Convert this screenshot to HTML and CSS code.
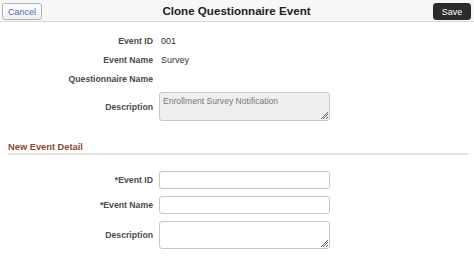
FILE: index.html
```html
<!DOCTYPE html>
<html lang="en">
<head>
    <meta charset="UTF-8">
    <meta name="viewport" content="width=device-width, initial-scale=1.0">
    <title>Clone Questionnaire Event</title>
    <link rel="stylesheet" href="styles.css">
</head>
<body>
    <header class="topbar">
        <div class="left"><button class="btn cancel">Cancel</button></div>
        <h1>Clone Questionnaire Event</h1>
        <div class="right"><button class="btn save">Save</button></div>
    </header>

    <div class="form show">
        <div class="row">
            <label>Event ID</label>
            <span class="value">001</span>
        </div>
        <div class="row">
            <label>Event Name</label>
            <span class="value">Survey</span>
        </div>
        <div class="row">
            <label>Questionnaire Name</label>
            <span class="value"></span>
        </div>
        <div class="row desc">
            <label>Description</label>
            <textarea class="area readonly" readonly>Enrollment Survey Notification</textarea>
        </div>
    </div>

    <h2 class="section">New Event Detail</h2>

    <div class="form edit">
        <div class="row">
            <label>*Event ID</label>
            <input type="text" class="field">
        </div>
        <div class="row">
            <label>*Event Name</label>
            <input type="text" class="field">
        </div>
        <div class="row desc">
            <label>Description</label>
            <textarea class="area"></textarea>
        </div>
    </div>
</body>
</html>
```

FILE: styles.css
```css
body {
    margin: 0;
    font-family: "Liberation Sans", Arial, sans-serif;
    background-color: #fff;
    color: #333;
}

.topbar {
    display: grid;
    grid-template-columns: 1fr auto 1fr;
    align-items: center;
    height: 21px;
    padding: 0 3px 0 2px;
    background-color: #f7f7f7;
    border-bottom: 1px solid #d9d9d9;
}

.topbar h1 {
    margin: 0;
    font-size: 11.6px;
    font-weight: bold;
    color: #222;
}

.topbar .right {
    text-align: right;
}

.btn {
    font-family: inherit;
    font-size: 9px;
    height: 17px;
    padding: 0;
    border-radius: 3px;
    cursor: pointer;
}

.cancel {
    width: 40px;
    color: #4a6fa0;
    background: linear-gradient(#ffffff, #f0f0f0);
    border: 1px solid #b3b3b3;
}

.save {
    width: 38px;
    color: #fff;
    background-color: #2c2c2c;
    border: 1px solid #2c2c2c;
}

.form {
    display: flex;
    flex-direction: column;
}

.form.show {
    padding-top: 9px;
}

.row {
    display: grid;
    grid-template-columns: 153px 171px;
    column-gap: 6px;
    align-items: center;
    min-height: 19px;
}

.row label {
    text-align: right;
    font-size: 8.7px;
    font-weight: bold;
    color: #4a4a4a;
}

.row .value {
    padding-left: 2px;
    font-size: 9px;
    color: #333;
}

.show .desc {
    margin-top: 4px;
}

.area, .field {
    box-sizing: border-box;
    width: 171px;
    margin: 0;
    font-family: inherit;
    font-size: 8.6px;
    border: 1px solid #c8c8c8;
    border-radius: 3px;
    resize: none;
    outline: none;
}

.field {
    height: 18px;
}

.area {
    height: 29px;
    padding: 3px 3px 2px;
    color: #777;
    background:
        linear-gradient(to bottom right, #fff 50%, transparent 50%) right 1px bottom 1px / 9px 9px no-repeat,
        repeating-linear-gradient(135deg, #666 0 0.7px, transparent 0.7px 1.8px) right 1px bottom 1px / 9px 9px no-repeat,
        #fff;
}

.area.readonly {
    background:
        linear-gradient(to bottom right, #efefef 50%, transparent 50%) right 1px bottom 1px / 9px 9px no-repeat,
        repeating-linear-gradient(135deg, #666 0 0.7px, transparent 0.7px 1.8px) right 1px bottom 1px / 9px 9px no-repeat,
        #efefef;
}

.section {
    margin: 20px 6px 0 8px;
    padding-bottom: 0;
    font-size: 9.3px;
    font-weight: bold;
    color: #8b4a2c;
    border-bottom: 2px solid #e2e2e2;
    line-height: 12px;
}

.form.edit {
    padding-top: 16px;
    row-gap: 7px;
}

.edit .row {
    min-height: 18px;
}

.edit .area {
    height: 28px;
}
```
